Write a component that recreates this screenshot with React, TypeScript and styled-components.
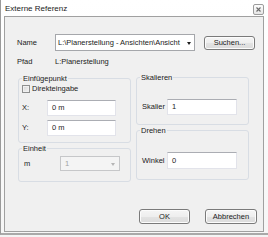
import React from "react";
import styled, { createGlobalStyle } from "styled-components";

const GlobalStyle = createGlobalStyle`
  html, body { margin: 0; padding: 0; background: #f4f4f4; }
  body {
    width: 268px; height: 237px; overflow: hidden;
    font-family: "Liberation Sans", Arial, sans-serif;
    font-size: 7.5px; color: #1b1b1b;
  }
  * { box-sizing: border-box; }
`;

const Window = styled.div`
  width: 268px;
  height: 235px;
  display: flex;
  flex-direction: column;
  padding: 0 4px 0 3px;
  background: linear-gradient(#ffffff, #f6f6f6);
  border-left: 1px solid #9a9a9a;
  border-bottom: 2px solid #a9a9a9;
`;

const TitleBar = styled.div`
  height: 16px;
  display: flex;
  align-items: center;
  justify-content: space-between;
  padding-left: 1px;
`;

const Title = styled.span`
  font-size: 8px;
  color: #1a1a1a;
  line-height: 10px;
  margin-top: 1px;
`;

const CloseButton = styled.div`
  width: 11px;
  height: 11px;
  margin-top: 3px;
  border: 1px solid #9c9c9c;
  border-radius: 2px;
  background: linear-gradient(#fdfdfd, #e6e6e6);
  display: flex;
  align-items: center;
  justify-content: center;
`;

const Client = styled.div`
  width: 260px;
  height: 216px;
  border: 1px solid #a0a0a0;
  background: #f0f0f0;
  display: flex;
  flex-direction: column;
  padding: 16px 0 0 12px;
`;

const Row = styled.div<{ $top?: number; $h?: number }>`
  display: flex;
  align-items: center;
  margin-top: ${(p) => p.$top ?? 0}px;
  height: ${(p) => p.$h ?? 16}px;
`;

const Label = styled.span<{ $w: number; $ml?: number }>`
  width: ${(p) => p.$w}px;
  margin-left: ${(p) => p.$ml ?? 0}px;
  flex-shrink: 0;
  line-height: 10px;
  white-space: nowrap;
`;

const Combo = styled.div`
  width: 140px;
  height: 17px;
  border: 1px solid #a5a7ab;
  background: #fff;
  display: flex;
  align-items: center;
  justify-content: space-between;
  padding: 0 3px 0 2px;
  white-space: nowrap;
`;

const Arrow = styled.span<{ $disabled?: boolean }>`
  width: 0;
  height: 0;
  border-left: 2.5px solid transparent;
  border-right: 2.5px solid transparent;
  border-top: 3px solid ${(p) => (p.$disabled ? "#b5b5b5" : "#1e1e1e")};
  margin-top: 1px;
`;

const Button = styled.button<{ $w: number; $h?: number; $ml?: number }>`
  width: ${(p) => p.$w}px;
  height: ${(p) => p.$h ?? 15}px;
  margin: 0 0 0 ${(p) => p.$ml ?? 0}px;
  padding: 0;
  border: 1px solid #7a7a7a;
  border-radius: 3px;
  background: linear-gradient(#f5f5f5 0%, #eeeeee 50%, #e3e3e3 51%, #dbdbdb 100%);
  font-family: inherit;
  font-size: 7.5px;
  color: #1b1b1b;
  line-height: 10px;
  box-shadow: inset 0 0 0 1px #fcfcfc;
`;

const Columns = styled.div`
  display: flex;
  gap: 5px;
  margin: 6px 0 0 1px;
  align-items: flex-start;
`;

const Column = styled.div<{ $top?: number }>`
  width: 113px;
  display: flex;
  flex-direction: column;
  gap: 1px;
  margin-top: ${(p) => p.$top ?? 0}px;
`;

const Group = styled.fieldset<{ $pb: number }>`
  margin: 0;
  padding: 0 3px ${(p) => p.$pb}px 3px;
  min-width: 0;
  border: 1px solid #d8dde4;
  border-radius: 3px;
`;

const Legend = styled.legend`
  padding: 0 1px;
  margin: 0;
  font-size: 7.5px;
  line-height: 9px;
  color: #1b1b1b;
`;

const CheckRow = styled.label`
  display: flex;
  align-items: center;
  gap: 2px;
  height: 10px;
  margin-top: 1px;
  line-height: 10px;
`;

const CheckBox = styled.span`
  width: 8px;
  height: 8px;
  border: 1px solid #8e8f8f;
  background: linear-gradient(135deg, #d6d6d6, #f4f4f4);
  box-shadow: inset 0 0 0 1px #f0f0f0;
`;

const TextBox = styled.div<{ $w: number; $h?: number }>`
  width: ${(p) => p.$w}px;
  height: ${(p) => p.$h ?? 16}px;
  background: #fff;
  border: 1px solid #e2e3ea;
  border-top-color: #abadb3;
  display: flex;
  align-items: center;
  padding-left: 4px;
  line-height: 10px;
`;

const DisabledSelect = styled.div`
  width: 60px;
  height: 15px;
  border: 1px solid #c6c7c9;
  background: #f4f4f4;
  color: #a2a2a2;
  display: flex;
  align-items: center;
  justify-content: space-between;
  padding: 0 4px 0 4px;
  line-height: 10px;
`;

const ButtonRow = styled.div`
  display: flex;
  justify-content: flex-end;
  gap: 15px;
  margin: 27px 6px 0 0;
`;

export default function App() {
  return (
    <>
      <GlobalStyle />
      <Window>
        <TitleBar>
          <Title>Externe Referenz</Title>
          <CloseButton>
            <svg width="5" height="5" viewBox="0 0 5 5">
              <path d="M0.5 0.5 L4.5 4.5 M4.5 0.5 L0.5 4.5" stroke="#6b6b6b" strokeWidth="1.1" />
            </svg>
          </CloseButton>
        </TitleBar>
        <Client>
          <Row $h={17} $top={1}>
            <Label $w={38}>Name</Label>
            <Combo>
              <span>L:\Planerstellung - Ansichten\Ansicht</span>
              <Arrow />
            </Combo>
            <Button $w={51} $h={14} $ml={9}>Suchen...</Button>
          </Row>
          <Row $h={11} $top={5}>
            <Label $w={38}>Pfad</Label>
            <span>L:Planerstellung</span>
          </Row>
          <Columns>
            <Column $top={1}>
              <Group $pb={6}>
                <Legend>Einfügepunkt</Legend>
                <CheckRow>
                  <CheckBox />
                  <span>Direkteingabe</span>
                </CheckRow>
                <Row $top={6}>
                  <Label $w={25}>X:</Label>
                  <TextBox $w={69}>0 m</TextBox>
                </Row>
                <Row $top={4}>
                  <Label $w={25}>Y:</Label>
                  <TextBox $w={69}>0 m</TextBox>
                </Row>
              </Group>
              <Group $pb={10}>
                <Legend>Einheit</Legend>
                <Row $h={15} $top={3}>
                  <Label $w={36} $ml={2}>m</Label>
                  <DisabledSelect>
                    <span>1</span>
                    <Arrow $disabled />
                  </DisabledSelect>
                </Row>
              </Group>
            </Column>
            <Column>
              <Group $pb={9}>
                <Legend>Skalieren</Legend>
                <Row $top={17}>
                  <Label $w={25} $ml={2}>Skalier</Label>
                  <TextBox $w={70}>1</TextBox>
                </Row>
              </Group>
              <Group $pb={10}>
                <Legend>Drehen</Legend>
                <Row $h={17} $top={17}>
                  <Label $w={25} $ml={2}>Winkel</Label>
                  <TextBox $w={70} $h={17}>0</TextBox>
                </Row>
              </Group>
            </Column>
          </Columns>
          <ButtonRow>
            <Button $w={51}>OK</Button>
            <Button $w={52}>Abbrechen</Button>
          </ButtonRow>
        </Client>
      </Window>
    </>
  );
}
